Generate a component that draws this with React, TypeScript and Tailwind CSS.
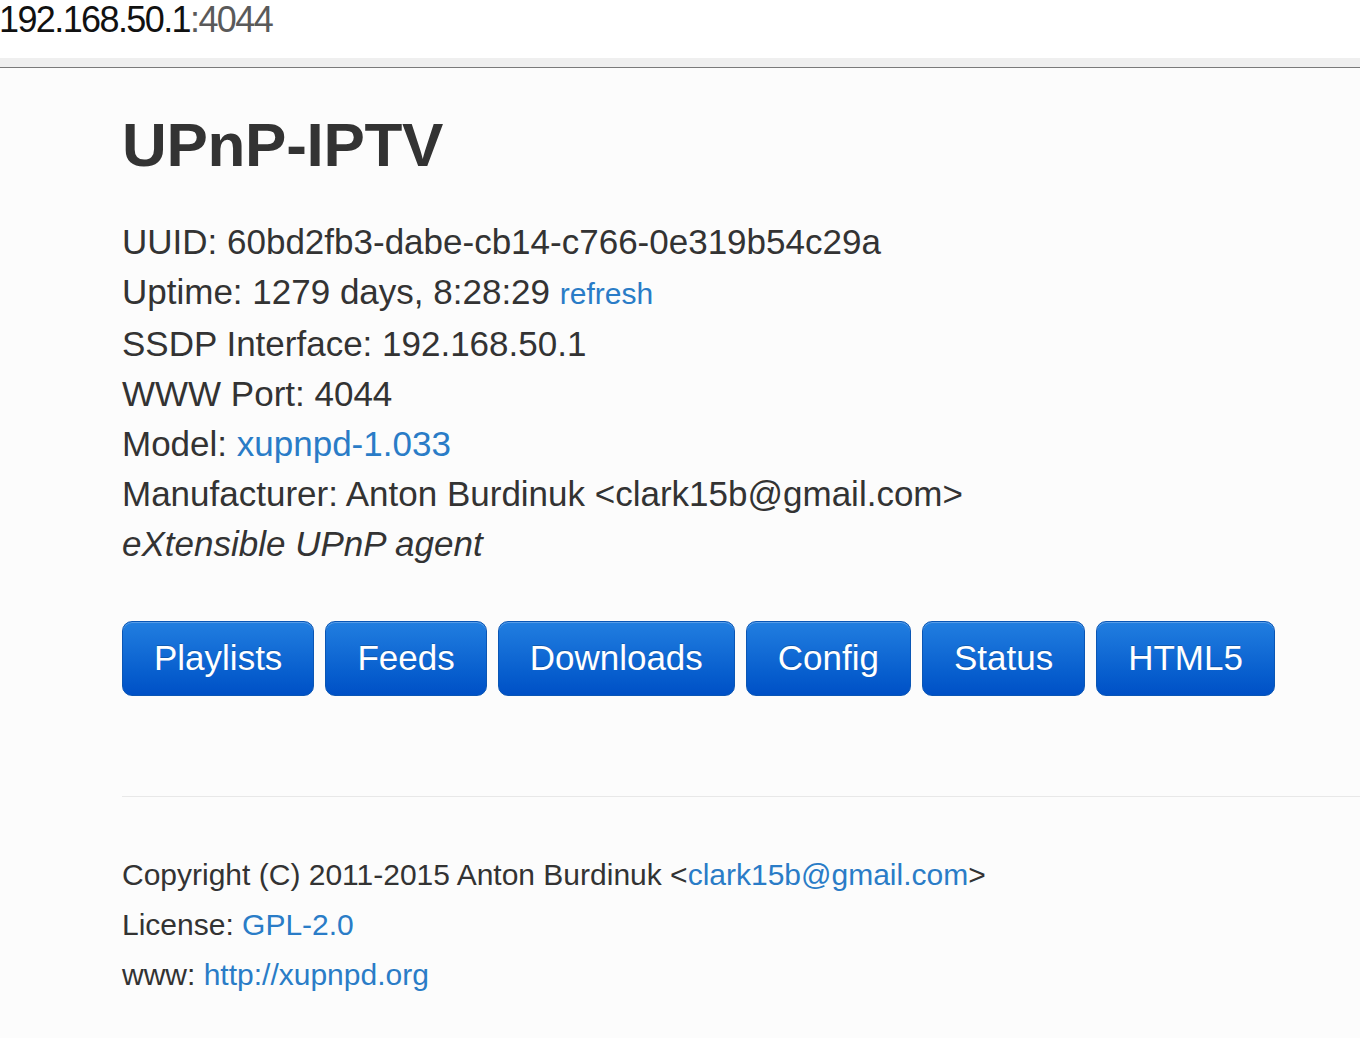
const BUTTONS = ['Playlists', 'Feeds', 'Downloads', 'Config', 'Status', 'HTML5'];

function Link({ children, className = '' }: { children: React.ReactNode; className?: string }) {
  return (
    <a href="#" className={`text-[#2a7cc7] ${className}`}>
      {children}
    </a>
  );
}

export default function App() {
  return (
    <div className="min-h-[1038px] bg-[#fcfcfc] font-['Liberation_Sans',Arial,sans-serif] text-[#333] overflow-hidden">
      {/* address bar */}
      <div className="h-[58px] bg-white">
        <div className="text-[36px] leading-[38px] tracking-[-1.6px] -ml-[1px] pt-[1px] whitespace-nowrap">
          <span className="text-[#111]">192.168.50.1</span>
          <span className="text-[#5a5a5a]">:4044</span>
        </div>
      </div>
      <div className="h-[9px] bg-[#efefef]" />
      <div className="h-px bg-[#7a7a7a]" />

      <div className="pl-[122px]">
        {/* jumbotron */}
        <h1 className="mt-[43px] text-[62px] leading-[68px] font-bold tracking-[-0.3px]">UPnP-IPTV</h1>

        <div className="mt-[38px] text-[35px] leading-[50px]">
          <p>UUID: 60bd2fb3-dabe-cb14-c766-0e319b54c29a</p>
          <p>
            Uptime: 1279 days, 8:28:29 <Link className="text-[30px]">refresh</Link>
          </p>
          <p>SSDP Interface: 192.168.50.1</p>
          <p>WWW Port: 4044</p>
          <p>
            Model: <Link>xupnpd-1.033</Link>
          </p>
          <p>Manufacturer: Anton Burdinuk &lt;clark15b@gmail.com&gt;</p>
          <p className="italic">eXtensible UPnP agent</p>
        </div>

        <div className="mt-[52px] flex gap-[11px]">
          {BUTTONS.map((b) => (
            <a
              key={b}
              href="#"
              className="h-[75px] flex items-center px-[31px] rounded-[10px] border border-[#0a56b5] bg-gradient-to-b from-[#217ee0] to-[#0050c6] text-white text-[35px] shadow-[inset_0_1px_0_rgba(255,255,255,0.25)] [text-shadow:0_-1px_0_rgba(0,0,0,0.2)]"
            >
              {b}
            </a>
          ))}
        </div>

        <hr className="mt-[100px] border-0 border-t border-[#e8e8e8]" />

        {/* footer */}
        <div className="mt-[53px] text-[30px] leading-[50px]">
          <p>
            Copyright (C) 2011-2015 Anton Burdinuk &lt;<Link>clark15b@gmail.com</Link>&gt;
          </p>
          <p>
            License: <Link>GPL-2.0</Link>
          </p>
          <p>
            www: <Link>http://xupnpd.org</Link>
          </p>
        </div>
      </div>
    </div>
  );
}
